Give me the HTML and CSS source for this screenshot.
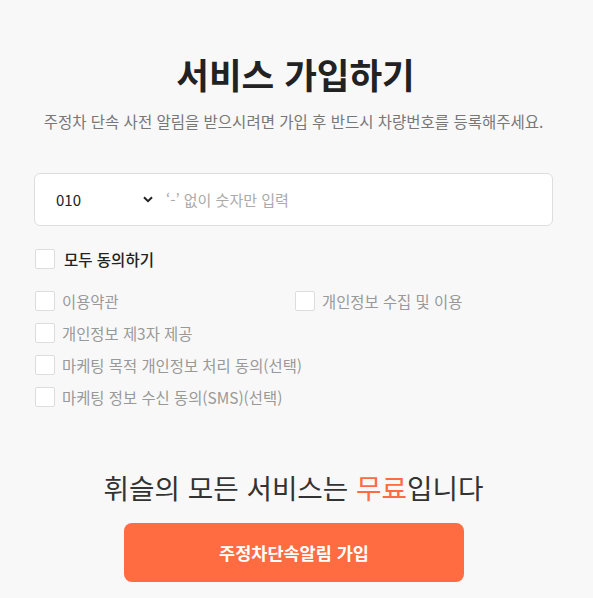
FILE: index.html
```html
<!DOCTYPE html>
<html lang="ko">
<head>
<meta charset="utf-8">
<link rel="stylesheet" href="styles.css">
</head>
<body>
<div class="page">
  <h1 class="title">서비스 가입하기</h1>
  <p class="subtitle">주정차 단속 사전 알림을 받으시려면 가입 후 반드시 차량번호를 등록해주세요.</p>
  <div class="phone">
    <div class="select">
      <span class="code">010</span>
      <svg class="chev" width="10" height="7" viewBox="0 0 10 7"><path d="M1 1.2 L5 5.2 L9 1.2" fill="none" stroke="#222" stroke-width="2"/></svg>
    </div>
    <span class="placeholder">‘-’ 없이 숫자만 입력</span>
  </div>
  <div class="agree-all">
    <span class="box"></span>
    <span class="all-label">모두 동의하기</span>
  </div>
  <div class="terms">
    <div class="term"><span class="box"></span><span>이용약관</span></div>
    <div class="term"><span class="box"></span><span>개인정보 수집 및 이용</span></div>
    <div class="term full"><span class="box"></span><span>개인정보 제3자 제공</span></div>
    <div class="term full"><span class="box"></span><span>마케팅 목적 개인정보 처리 동의(선택)</span></div>
    <div class="term full"><span class="box"></span><span>마케팅 정보 수신 동의(SMS)(선택)</span></div>
  </div>
  <p class="free">휘슬의 모든 서비스는 <span class="accent">무료</span>입니다</p>
  <div class="btn-wrap"><button class="btn">주정차단속알림 가입</button></div>
</div>
</body>
</html>
```
FILE: styles.css
```css
html, body {
  margin: 0;
  padding: 0;
  background: #f8f8f8;
  font-family: "Noto Sans CJK KR", "Noto Sans", sans-serif;
}
.page {
  width: 519px;
  padding: 48px 0 0 34px;
}
.title {
  margin: 0;
  text-align: center;
  font-size: 35.5px;
  font-weight: 700;
  line-height: 52px;
  color: #222;
  padding-left: 4px;
}
.subtitle {
  margin: 10px 0 0 -30px;
  width: 579px;
  text-align: center;
  font-size: 15.5px;
  line-height: 22px;
  color: #777;
}
.phone {
  margin-top: 41px;
  height: 51px;
  background: #fff;
  border: 1px solid #dedede;
  border-radius: 6px;
  display: flex;
  align-items: center;
}
.select {
  display: flex;
  align-items: center;
  justify-content: space-between;
  box-sizing: border-box;
  width: 124px;
  padding-left: 21px;
  padding-right: 6px;
}
.code {
  font-size: 15px;
  color: #222;
}
.placeholder {
  margin-left: 7px;
  font-size: 15px;
  color: #aaa;
}
.box {
  width: 18px;
  height: 18px;
  border: 1px solid #ddd;
  background: #fff;
  border-radius: 2px;
  flex: none;
}
.agree-all {
  margin-top: 22px;
  display: flex;
  align-items: center;
  gap: 9px;
  padding-left: 1px;
  height: 22px;
}
.all-label {
  font-size: 15.5px;
  font-weight: 500;
  color: #222;
}
.terms {
  margin-top: 20px;
  display: grid;
  grid-template-columns: 260px 1fr;
  row-gap: 10px;
  padding-left: 1px;
}
.term {
  display: flex;
  align-items: center;
  gap: 7px;
  height: 22px;
  font-size: 15.4px;
  color: #999;
}
.term.full {
  grid-column: 1 / 3;
}
.free {
  margin: 59px 0 0 0;
  text-align: center;
  font-size: 27.7px;
  line-height: 40px;
  color: #333;
}
.accent {
  color: #ff6b43;
}
.btn-wrap {
  margin-top: 16px;
  display: flex;
  padding-left: 90px;
}
.btn {
  width: 340px;
  height: 59px;
  border: none;
  border-radius: 8px;
  background: #ff6c42;
  color: #fff;
  font-family: inherit;
  font-size: 17.5px;
  font-weight: 700;
}
```
